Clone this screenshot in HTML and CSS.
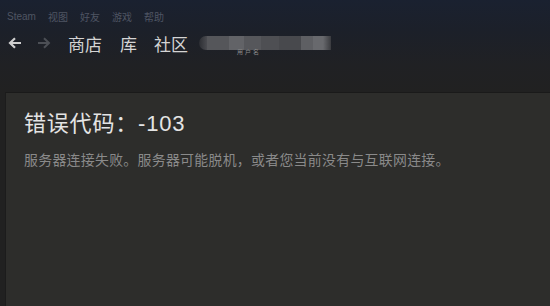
FILE: index.html
```html
<!DOCTYPE html>
<html lang="zh-CN">
<head>
    <meta charset="UTF-8">
    <title>Steam - 错误</title>
    <link rel="stylesheet" href="styles.css">
</head>
<body>
    <div class="app">
        <div class="titlebar">
            <div class="menu">
                <span class="menu-item">Steam</span>
                <span class="menu-item">视图</span>
                <span class="menu-item">好友</span>
                <span class="menu-item">游戏</span>
                <span class="menu-item">帮助</span>
            </div>
            <div class="nav-row">
                <span class="arrow back">
                    <svg width="14" height="12" viewBox="0 0 14 12"><path d="M13 6H2.5M7 1.2L2 6l5 4.8" fill="none" stroke="currentColor" stroke-width="2.2"/></svg>
                </span>
                <span class="arrow fwd">
                    <svg width="14" height="12" viewBox="0 0 14 12"><path d="M1 6h10.5M7 1.2L12 6l-5 4.8" fill="none" stroke="currentColor" stroke-width="2"/></svg>
                </span>
                <a class="nav-link">商店</a>
                <a class="nav-link">库</a>
                <a class="nav-link">社区</a>
                <span class="user-blur"><span class="user-tail">用户名</span></span>
            </div>
        </div>

        <div class="content">
            <div class="panel">
                <h1 class="err-title">错误代码：-103</h1>
                <p class="err-text">服务器连接失败。服务器可能脱机，或者您当前没有与互联网连接。</p>
            </div>
        </div>
    </div>
</body>
</html>
```

FILE: styles.css
```css
html, body { margin: 0; padding: 0; background: #212121; }
body { width: 550px; height: 306px; overflow: hidden; font-family: "Liberation Sans", "Noto Sans CJK SC", sans-serif; }

.app { display: flex; flex-direction: column; height: 306px; background: #212121; }

.titlebar { height: 92px; background: linear-gradient(180deg, #1a2130 0%, #1c2029 35%, #202124 70%, #212121 100%); }

.menu { display: flex; gap: 12px; padding: 5px 0 0 7px; height: 22px; align-items: center; }
.menu-item { color: #4f5563; font-size: 10px; }

.nav-row { display: flex; align-items: center; height: 26px; padding: 3px 0 0 8px; }
.arrow { display: flex; align-items: center; }
.arrow.back { color: #cfcfcf; margin-right: 15px; }
.arrow.fwd { color: #4c4f55; margin-right: 17px; }
.nav-link { color: #d4d4d4; font-size: 17px; margin-right: 17px; }
.nav-link:nth-of-type(1) { margin-right: 18px; }

.user-blur { position: relative; width: 132px; height: 14px; margin-left: -6px; border-radius: 7px 0 0 7px;
    background: linear-gradient(90deg, #2c2e33 0px, #4a4b50 8px, #55565a 8px, #55565a 30px, #626367 30px, #626367 45px, #56575b 45px, #56575b 62px, #4e4f53 62px, #4e4f53 80px, #48494d 80px, #48494d 102px, #5e5f63 102px, #5e5f63 114px, #68696d 114px, #68696d 124px, #3a3b3f 132px); }
.user-tail { position: absolute; left: 38px; top: 13px; font-size: 6px; line-height: 6px; color: #8a8a8a; letter-spacing: 2px; }

.content { flex: 1; padding-left: 5px; }
.panel { height: 100%; background: #2d2d2b; border-top: 1px solid #1a1a1a; border-left: 1px solid #1c1c1c; padding: 16px 0 0 18px; box-sizing: border-box; }

.err-title { margin: 0; color: #e4e4e4; font-size: 22px; font-weight: normal; line-height: 30px; letter-spacing: 0.8px; }
.err-text { margin: 12px 0 0; color: #8a8a8a; font-size: 13.9px; line-height: 18px; letter-spacing: 0.3px; }
```
